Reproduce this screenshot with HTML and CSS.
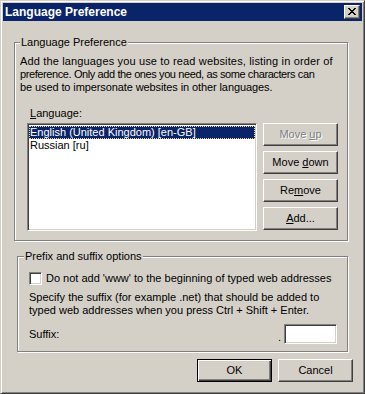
FILE: index.html
```html
<!DOCTYPE html>
<html lang="en">
<head>
  <meta charset="UTF-8">
  <title>Language Preference</title>
  <link rel="stylesheet" href="styles.css">
</head>
<body>

<div class="window">
  <div class="titlebar">
    <span class="title">Language Preference</span>
    <span class="close-btn">
      <svg width="8" height="7" viewBox="0 0 8 7" shape-rendering="crispEdges">
        <path d="M0 0h2v1H0z M6 0h2v1H6z M1 1h2v1H1z M5 1h2v1H5z M2 2h4v1H2z M3 3h2v1H3z M2 4h4v1H2z M1 5h2v1H1z M5 5h2v1H5z M0 6h2v1H0z M6 6h2v1H6z" fill="#000"/>
      </svg>
    </span>
  </div>

  <div class="dialog-body">

    <!-- diller -->
    <fieldset class="group group-lang">
      <legend>Language Preference</legend>
      <p class="desc">
        <span class="line line-1">Add the languages you use to read websites, listing in order of</span>
        <span class="line line-2">preference. Only add the ones you need, as some characters can</span>
        <span class="line line-3">be used to impersonate websites in other languages.</span>
      </p>
      <div class="lang-label"><u>L</u>anguage:</div>
      <div class="lang-row">
        <div class="listbox">
          <div class="list-item selected">English (United Kingdom) [en-GB]</div>
          <div class="list-item">Russian [ru]</div>
        </div>
        <div class="side-buttons">
          <div class="btn disabled"><span>Move <u>u</u>p</span></div>
          <div class="btn"><span>Move <u>d</u>own</span></div>
          <div class="btn"><span>Re<u>m</u>ove</span></div>
          <div class="btn"><span><u>A</u>dd...</span></div>
        </div>
      </div>
    </fieldset>

    <!-- prefix / suffix -->
    <fieldset class="group group-prefix">
      <legend>Prefix and suffix options</legend>
      <div class="opts">
        <div class="check-row">
          <span class="checkbox"></span>
          <span>Do not add 'www' to the beginning of typed web addresses</span>
        </div>
        <p class="spec">Specify the suffix (for example .net) that should be added to<br>typed web addresses when you press Ctrl + Shift + Enter.</p>
        <div class="suffix-row">
          <span>Suffix:</span>
          <span class="suffix-field"><span class="dot">.</span><span class="textbox"></span></span>
        </div>
      </div>
    </fieldset>

    <div class="dialog-buttons">
      <div class="btn default"><span>OK</span></div>
      <div class="btn">Cancel</div>
    </div>
  </div>
</div>

</body>
</html>
```

FILE: styles.css
```css
body {
  margin: 0;
  background-color: #d4d0c8;
  font-family: "Liberation Sans", Arial, sans-serif;
  font-size: 11px;
  line-height: 13px;
  color: #000;
}

/* pencere */
.window {
  width: 365px;
  height: 394px;
  box-sizing: border-box;
  background: #d4d0c8;
  border: 1px solid;
  border-color: #d4d0c8 #404040 #404040 #d4d0c8;
  box-shadow: inset 1px 1px 0 #fff, inset -1px -1px 0 #808080;
  padding: 2px;
  display: flex;
  flex-direction: column;
}

.titlebar {
  height: 18px;
  background: #0a246a;
  color: #fff;
  display: flex;
  align-items: center;
  justify-content: space-between;
  padding: 0 2px;
}

.title {
  font-weight: bold;
  font-size: 12px;
}

.close-btn {
  width: 16px;
  height: 14px;
  box-sizing: border-box;
  background: #d4d0c8;
  border: 1px solid;
  border-color: #fff #404040 #404040 #fff;
  box-shadow: inset -1px -1px 0 #808080;
  display: flex;
  align-items: center;
  justify-content: center;
  padding: 0 1px 1px 0;
}

.dialog-body {
  padding-top: 15px;
}

/* grup kutulari */
.group {
  margin: 0;
  min-width: 0;
  border: 1px solid #808080;
  box-shadow: 1px 1px 0 #fff, inset 1px 1px 0 #fff;
}

.group legend {
  padding: 0 1px;
  background: #d4d0c8;
  line-height: 13px;
}

.group-lang {
  margin: 0 14px 0 11px;
  padding: 6px 0 9px 5px;
}

.desc {
  margin: 0;
  white-space: nowrap;
}

.desc .line {
  display: block;
}

/* Tahoma genisliklerine yaklasmak icin */
.line-1 { letter-spacing: 0.15px; }
.line-2 { letter-spacing: -0.4px; }
.line-3 { letter-spacing: -0.1px; }

.lang-label {
  margin: 13px 0 0 10px;
}

.lang-row {
  display: flex;
  margin: 3px 0 0 7px;
}

.listbox {
  width: 230px;
  height: 108px;
  box-sizing: border-box;
  background: #fff;
  border: 1px solid;
  border-color: #808080 #fff #fff #808080;
  box-shadow: inset 1px 1px 0 #404040, inset -1px -1px 0 #d4d0c8;
  padding: 2px 1px;
}

.list-item {
  height: 13px;
  box-sizing: border-box;
  padding-left: 1px;
  white-space: nowrap;
}

.list-item.selected {
  background: #0a246a;
  color: #fff;
  border: 1px dotted #f0d890;
  line-height: 11px;
  padding-left: 0;
}

.side-buttons {
  display: flex;
  flex-direction: column;
  gap: 5px;
  margin-left: 6px;
}

/* butonlar */
.btn {
  width: 75px;
  height: 23px;
  box-sizing: border-box;
  border: 1px solid;
  border-color: #fff #404040 #404040 #fff;
  box-shadow: inset -1px -1px 0 #808080;
  display: flex;
  align-items: center;
  justify-content: center;
  padding-bottom: 1px;
  white-space: nowrap;
}

.btn.disabled {
  color: #808080;
  text-shadow: 1px 1px 0 #fff;
}

.btn.default {
  border-color: #000;
  box-shadow: inset 1px 1px 0 #fff, inset -1px -1px 0 #404040, inset -2px -2px 0 #808080;
}

.group-prefix {
  margin: 9px 14px 0 14px;
  padding: 9px 10px 7px 6px;
}

.opts {
  padding-left: 5px;
}

.check-row {
  display: flex;
  align-items: center;
  gap: 4px;
  height: 13px;
}

.checkbox {
  width: 13px;
  height: 13px;
  box-sizing: border-box;
  background: #fff;
  border: 1px solid;
  border-color: #808080 #fff #fff #808080;
  box-shadow: inset 1px 1px 0 #404040, inset -1px -1px 0 #d4d0c8;
}

.spec {
  margin: 6px 0 0;
  white-space: nowrap;
}

.suffix-row {
  display: flex;
  justify-content: space-between;
  align-items: center;
  margin-top: 7px;
}

.suffix-field {
  display: flex;
  align-items: flex-end;
}

.dot {
  line-height: 13px;
  margin-right: 3px;
}

.textbox {
  width: 53px;
  height: 20px;
  box-sizing: border-box;
  background: #fff;
  border: 1px solid;
  border-color: #808080 #fff #fff #808080;
  box-shadow: inset 1px 1px 0 #404040, inset -1px -1px 0 #d4d0c8;
}

.dialog-buttons {
  display: flex;
  justify-content: flex-end;
  gap: 6px;
  margin-top: 7px;
  padding-right: 9px;
}
```
